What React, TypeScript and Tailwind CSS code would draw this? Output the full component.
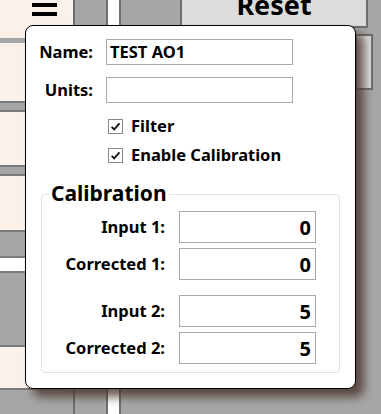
import React from 'react';

const font = { fontFamily: '"Noto Sans", "Open Sans", sans-serif' };

const Check = () => (
  <span className="w-[15px] h-[15px] border border-[#8a8a8a] bg-white flex items-center justify-center">
    <svg viewBox="0 0 12 12" className="w-[11px] h-[11px]" fill="none" stroke="#111" strokeWidth="2">
      <path d="M1.8 6.3 L4.6 9.2 L10.3 2.6" />
    </svg>
  </span>
);

const CalRow = ({ label, value, className = '' }: { label: string; value: string; className?: string }) => (
  <div className={`flex items-center ${className}`}>
    <span className="w-[124px] text-right text-[16.5px] font-bold pr-[1px]">{label}</span>
    <div className="ml-[13px] w-[137px] h-[32px] border border-[#a9a9a9] bg-white flex items-end justify-end pr-[4px] text-[20px] font-bold leading-[28px]">
      {value}
    </div>
  </div>
);

const LeftColumn = () => (
  <div className="w-[75px] flex flex-col bg-[#a6a6a6] border-r-2 border-[#6e6e6e]">
    <div className="h-[38px] bg-[#f9f1ea] rounded-br-[10px] relative">
      <div className="absolute left-[32px] top-[3px] w-[25px] h-[4px] bg-black" />
      <div className="absolute left-[32px] top-[12px] w-[25px] h-[4px] bg-black" />
    </div>
    <div className="h-[5px]" />
    <div className="h-[60px] bg-[#f9f1ea] border-b-2 border-[#7a7a7a]" />
    <div className="h-[7px]" />
    <div className="h-[57px] bg-[#f9f1ea] border-t-2 border-b-2 border-[#7a7a7a]" />
    <div className="h-[7px]" />
    <div className="h-[58px] bg-[#f9f1ea] border-t-2 border-b-2 border-[#7a7a7a]" />
    <div className="h-[26px] border-b-2 border-[#7a7a7a]" />
    <div className="h-[13px] bg-white" />
    <div className="h-[76px] border-t-2 border-b-2 border-[#7a7a7a]" />
    <div className="h-[43px] bg-[#f9f1ea] rounded-br-[12px] border-r-2 border-b-2 border-[#7a7a7a] relative">
      <div className="absolute left-[40px] top-[34px] w-[17px] h-[5px] bg-black" />
    </div>
  </div>
);

export default function App() {
  return (
    <div className="relative w-[381px] h-[414px] overflow-hidden bg-[#a6a6a6] flex text-black" style={font}>
      <LeftColumn />
      <div className="w-[33px] bg-[#a6a6a6] border-r-2 border-[#6e6e6e]" />
      <div className="w-[13px] bg-white border-r-2 border-[#6e6e6e]" />
      <div className="flex-1 flex flex-col">
        <div className="flex h-[28px]">
          <div className="w-[61px] border-r-2 border-[#6e6e6e]" />
          <div className="w-[186px] bg-[#dcdcdc] border-r-2 border-b-2 border-[#6e6e6e] flex items-start justify-center overflow-hidden">
            <span className="text-[27px] font-bold leading-none -mt-[9px]">Reset</span>
          </div>
        </div>
        <div className="flex justify-end pr-[8px] mt-[6px]">
          <div className="w-[18px] h-[56px] bg-[#dcdcdc] border-2 border-[#6e6e6e]" />
        </div>
      </div>

      {/* popup */}
      <div className="absolute left-[25px] top-[25px] w-[331px] h-[364px] bg-white border border-black rounded-[8px] shadow-[8px_8px_10px_rgba(70,50,40,0.8)]">
        <div className="pt-[13px] flex flex-col">
          <div className="flex items-center">
            <span className="w-[67px] text-right text-[16.5px] font-bold">Name:</span>
            <div className="ml-[13px] w-[187px] h-[26px] border border-[#a9a9a9] flex items-center pl-[3px] text-[16.5px] font-bold">
              TEST AO1
            </div>
          </div>
          <div className="flex items-center mt-[12px]">
            <span className="w-[67px] text-right text-[16.5px] font-bold">Units:</span>
            <div className="ml-[13px] w-[187px] h-[26px] border border-[#a9a9a9]" />
          </div>
          <div className="flex items-center gap-[8px] ml-[82px] mt-[12px] h-[22px]">
            <Check />
            <span className="text-[16.5px] font-bold">Filter</span>
          </div>
          <div className="flex items-center gap-[8px] ml-[82px] mt-[7px] h-[22px]">
            <Check />
            <span className="text-[16.5px] font-bold">Enable Calibration</span>
          </div>
        </div>

        <div className="relative mx-[15px] mt-[28px] h-[179px] border border-[#dbe2e8] rounded-[4px]">
          <span className="absolute left-[7px] -top-[17px] bg-white px-[2px] text-[21px] font-bold leading-[30px]">
            Calibration
          </span>
          <div className="pt-[16px] flex flex-col">
            <CalRow label="Input 1:" value="0" />
            <CalRow label="Corrected 1:" value="0" className="mt-[5px]" />
            <CalRow label="Input 2:" value="5" className="mt-[15px]" />
            <CalRow label="Corrected 2:" value="5" className="mt-[5px]" />
          </div>
        </div>
      </div>
    </div>
  );
}
